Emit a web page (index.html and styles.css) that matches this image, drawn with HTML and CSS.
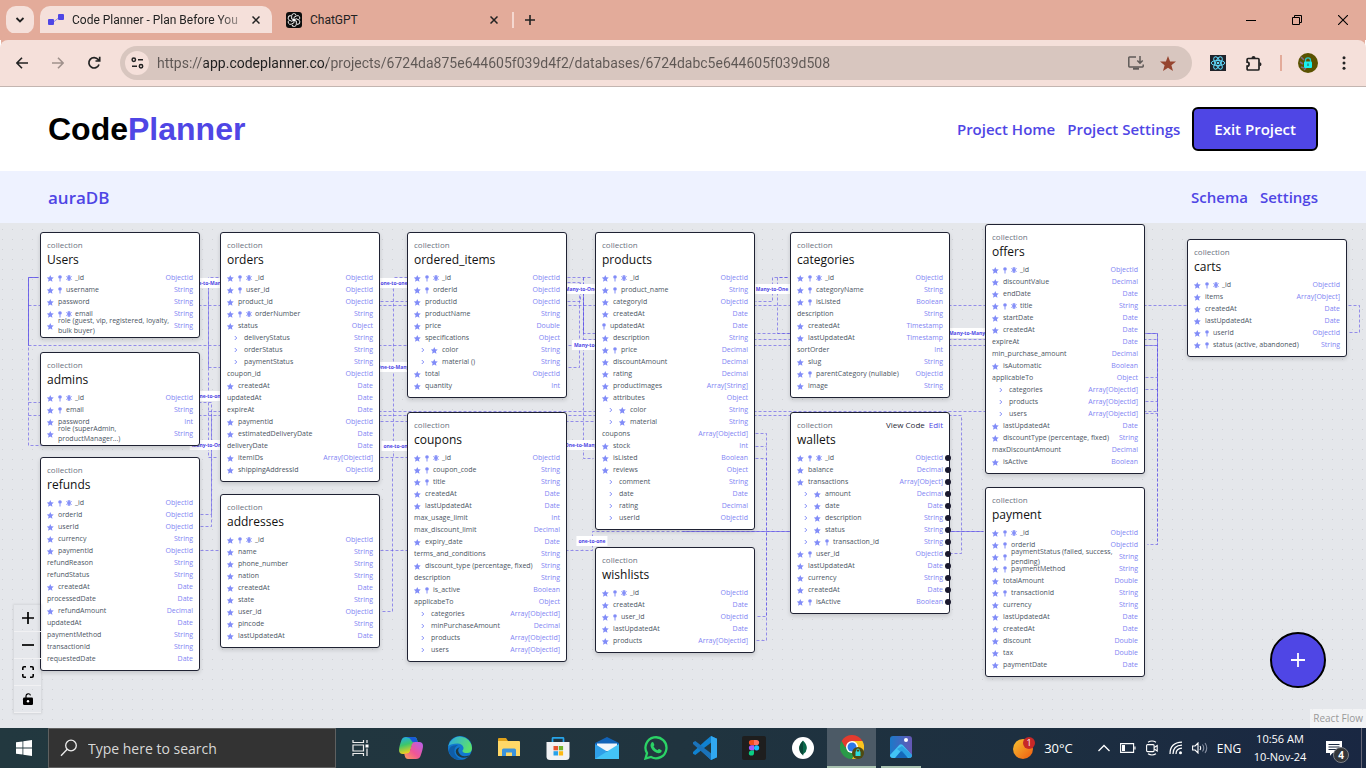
FILE: index.html
```html
<!DOCTYPE html>
<html lang="en">
<head>
<meta charset="utf-8">
<title>Code Planner - Plan Before You Code</title>
<link rel="stylesheet" href="styles.css">
</head>
<body>
<div class="tabstrip">
  <button class="tab-search" aria-label="Search tabs"><svg width="10" height="8" viewBox="0 0 10 8"><path d="M1.500 2l3.500 3.500L8.500 2" fill="none" stroke="#222" stroke-width="1.800"/></svg></button>
  <div class="tab tab-active">
    <svg class="favicon" width="16" height="16" viewBox="0 0 16 16"><path d="M3 12L13 4" stroke="#8e88ee"/><rect y="7" width="6" height="6" rx="1" fill="#4f46e5"/><rect x="10" y="2" width="6" height="6" rx="1" fill="#4f46e5"/></svg>
    <span class="tab-title fade">Code Planner - Plan Before You</span>
    <button class="tab-close" aria-label="Close tab"><svg width="8" height="8" viewBox="0 0 8 8"><path d="M.5.5l7 7m0-7l-7 7" stroke="#222" stroke-width="1.500"/></svg></button>
  </div>
  <div class="tab tab-second">
    <svg class="favicon" width="16" height="16" viewBox="0 0 16 16"><rect width="16" height="16" rx="3" fill="#0d0d0d"/><g fill="none" stroke="#fff" stroke-width=".9"><g id="petal"><path d="M8 8.500V5.300l2.700-1.500a2.200 2.200 0 0 1 2.300 3.700"/></g><use href="#petal" transform="rotate(60 8 8)"/><use href="#petal" transform="rotate(120 8 8)"/><use href="#petal" transform="rotate(180 8 8)"/><use href="#petal" transform="rotate(240 8 8)"/><use href="#petal" transform="rotate(300 8 8)"/></g></svg>
    <span class="tab-title">ChatGPT</span>
    <button class="tab-close" aria-label="Close tab"><svg width="8" height="8" viewBox="0 0 8 8"><path d="M.5.5l7 7m0-7l-7 7" stroke="#222" stroke-width="1.500"/></svg></button>
  </div>
  <button class="new-tab" aria-label="New tab"><svg width="10" height="10" viewBox="0 0 10 10"><path d="M5 0v10M0 5h10" stroke="#222" stroke-width="1.600"/></svg></button>
  <div class="window-buttons">
    <button aria-label="Minimize"><svg width="10" height="10" viewBox="0 0 10 10"><path d="M0 5.500h10" stroke="#000"/></svg></button>
    <button aria-label="Restore"><svg width="10" height="10" viewBox="0 0 10 10" fill="none" stroke="#000"><path d="M.5 2.500h7v7h-7zM2.500 2.500v-2h7v7h-2"/></svg></button>
    <button aria-label="Close"><svg width="10" height="10" viewBox="0 0 10 10"><path d="M0 0l10 10M10 0L0 10" stroke="#000" stroke-width="1.100"/></svg></button>
  </div>
</div>
<div class="toolbar">
  <button aria-label="Back"><svg width="12" height="12" viewBox="0 0 12 12" fill="none" stroke="#222" stroke-width="1.600"><path d="M12 6H1M6 .8L.9 6 6 11.200"/></svg></button>
  <button aria-label="Forward"><svg width="12" height="12" viewBox="0 0 12 12" fill="none" stroke="#a0918c" stroke-width="1.600"><path d="M0 6h11M6 .8L11.100 6 6 11.200"/></svg></button>
  <button aria-label="Reload"><svg width="14" height="14" viewBox="0 0 14 14" fill="none" stroke="#222" stroke-width="1.700"><path d="M12 8.500A5.200 5.200 0 1 1 11.200 3.600L12.500 5M12.700.8V5H8.500"/></svg></button>
  <div class="omnibox">
    <button class="site-info" aria-label="Site information"><svg width="13" height="12" viewBox="0 0 13 12" fill="none" stroke="#222" stroke-width="1.500"><circle cx="2.800" cy="2.800" r="1.700"/><path d="M7 2.800h5M1 9.200h5"/><circle cx="10" cy="9.200" r="1.700"/></svg></button>
    <input class="url" type="text" aria-label="Address" value="https://app.codeplanner.co/projects/6724da875e644605f039d4f2/databases/6724dabc5e644605f039d508">
    <button aria-label="Install app"><svg width="16" height="14" viewBox="0 0 16 14" fill="none" stroke="#5f5a58" stroke-width="1.500"><path d="M8 1H1.500Q.8 1 .8 1.700V10.300Q.8 11 1.500 11H14.500Q15.200 11 15.200 10.300V8.500M12 0V6.500M9.300 4.500L12 7.200l2.700-2.700"/><path d="M5 12.700h6" stroke-width="2"/></svg></button>
    <button aria-label="Bookmark"><svg width="16" height="15" viewBox="0 0 16 15"><path d="M8 0l2.100 5.400 5.900.2-4.600 3.600L13 15 8 11.700 3 15l1.600-5.800L0 5.600l5.900-.2z" fill="#96452f"/></svg></button>
  </div>
  <button class="ext" aria-label="React Developer Tools"><svg width="16" height="16" viewBox="0 0 16 16"><rect width="16" height="16" fill="#20232a"/><g fill="none" stroke="#61dafb"><ellipse cx="8" cy="8" rx="6.800" ry="2.600"/><ellipse cx="8" cy="8" rx="6.800" ry="2.600" transform="rotate(60 8 8)"/><ellipse cx="8" cy="8" rx="6.800" ry="2.600" transform="rotate(120 8 8)"/></g><circle cx="8" cy="8" r="1.300" fill="#61dafb"/></svg></button>
  <button class="ext" aria-label="Extensions"><svg width="17" height="17" viewBox="0 0 17 17"><path d="M2 3.500h10q1 0 1 1V14q0 1-1 1H2q-.9 0-.9-1v-2.800a2 2 0 0 0 0-4V4.500q0-1 .9-1z" fill="none" stroke="#222" stroke-width="1.700"/><path d="M5.500 3a2 2 0 0 1 4 0zM13.500 7.200a2 2 0 0 1 0 4z" fill="#222"/></svg></button>
  <i class="bar-sep"></i>
  <button class="ext" aria-label="Profile"><svg width="20" height="20" viewBox="0 0 20 20"><circle cx="10" cy="10" r="10" fill="#5a5200"/><path d="M3 4l3 3M2 9l3 2M3 14l3 1M6 17l2-2" stroke="#7b6a86" stroke-width="1.600"/><path d="M7.500 9V7.300a2.500 2.500 0 0 1 5 0V9" fill="none" stroke="#28c9c9" stroke-width="1.300"/><rect x="6" y="8.500" width="8" height="6.500" rx="1" fill="#19f0f0"/><path d="M10 10.500v2.500" stroke="#27584f"/></svg></button>
  <button class="menu-btn" aria-label="Menu"><svg width="4" height="14" viewBox="0 0 4 14" fill="#222"><circle cx="2" cy="1.800" r="1.500"/><circle cx="2" cy="7" r="1.500"/><circle cx="2" cy="12.200" r="1.500"/></svg></button>
</div>

<header class="app-header">
  <a class="logo" href="#">Code<span>Planner</span></a>
  <nav class="links"><a href="#">Project Home</a><a href="#">Project Settings</a><button class="exit">Exit Project</button></nav>
</header>
<div class="subbar">
  <h1>auraDB</h1>
  <nav class="links"><a href="#">Schema</a><a href="#">Settings</a></nav>
</div>

<main class="flow" id="flow">
  <svg class="edges" id="edges" aria-hidden="true"></svg>
  <div class="controls">
    <button aria-label="Zoom in"><svg width="12" height="12" viewBox="0 0 12 12"><path d="M6 0v12M0 6h12" stroke="#000" stroke-width="1.700"/></svg></button>
    <button aria-label="Zoom out"><svg width="12" height="12" viewBox="0 0 12 12"><path d="M0 6h12" stroke="#000" stroke-width="1.700"/></svg></button>
    <button aria-label="Fit view"><svg width="12" height="12" viewBox="0 0 12 12" fill="none" stroke="#000" stroke-width="1.600"><path d="M.8 4V2q0-1.200 1.200-1.200h2M8 .8h2q1.200 0 1.200 1.200v2M11.200 8v2q0 1.200-1.200 1.200H8M4 11.200H2Q.8 11.200.8 10V8"/></svg></button>
    <button aria-label="Toggle interactivity"><svg width="10" height="12" viewBox="0 0 10 12"><path d="M3 5V3a2.300 2.300 0 0 1 4.500-.6" fill="none" stroke="#000" stroke-width="1.200"/><rect y="4.500" width="10" height="7.500" rx="1.200"/><circle cx="5" cy="8.200" r="1.200" fill="#fff"/></svg></button>
  </div>
  <button class="add" aria-label="Add collection"><svg width="14" height="14" viewBox="0 0 14 14"><path d="M7 0v14M0 7h14" stroke="#fff" stroke-width="1.800"/></svg></button>
  <a class="attribution" href="#">React Flow</a>
</main>

<footer class="taskbar">
  <button class="start" aria-label="Start"><svg width="16" height="16" viewBox="0 0 16 16" fill="#fff"><path d="M0 2.300L6.500 1.400v6.200H0zM7.300 1.300L16 0v7.600H7.300zM0 8.400h6.500v6.200L0 13.700zM7.300 8.400H16V16l-8.700-1.300z"/></svg></button>
  <label class="search"><svg width="18" height="18" viewBox="0 0 18 18" fill="none" stroke="#eee" stroke-width="1.300"><circle cx="11" cy="6.500" r="5.300"/><path d="M7.200 10.300L1 16.800"/></svg><input type="text" placeholder="Type here to search" aria-label="Type here to search"></label>
  <div class="apps">
    <button aria-label="Task view"><svg width="17" height="16" viewBox="0 0 17 16" fill="none" stroke="#eee" stroke-width="1.200"><path d="M1 0v2.500h10.500V0M1 5h10.500v6H1zM1 16v-2.500h10.500V16M15 0v3M15 8.500V16"/><path d="M13.500 4.500h3v3h-3z" fill="#fff" stroke="none"/></svg></button>
    <button aria-label="Copilot"><svg width="24" height="22" viewBox="0 0 24 22"><defs><linearGradient id="c1" x1="0" y1="0" x2=".3" y2="1"><stop offset="0" stop-color="#20a8f5"/><stop offset=".5" stop-color="#3cc66b"/><stop offset="1" stop-color="#f5cf1c"/></linearGradient><linearGradient id="c2" x1="1" y1="0" x2="0" y2="1"><stop offset="0" stop-color="#b460f0"/><stop offset=".55" stop-color="#f05695"/><stop offset="1" stop-color="#fda057"/></linearGradient></defs><path d="M7 0h8q2.500 0 3.200 3l.6 2.500h-3q-2 0-2.600 2l-2.200 7.500q-.7 2-3 2H4q-4 0-4-4Q0 10 2.500 3 3.500 0 7 0z" fill="url(#c1)"/><path d="M7 0h8q2.500 0 3.200 3l.6 2.500h-3Q13 5.500 12 3t-5-3z" fill="#185bd8"/><path d="M17 22H9q-2.500 0-3.200-3l-.6-2.500h3q2 0 2.600-2l2.200-7.500q.7-2 3-2H20q4 0 4 4 0 3-2.500 10-1 3-4.500 3z" fill="url(#c2)"/></svg></button>
    <button aria-label="Edge"><svg width="24" height="24" viewBox="0 0 24 24"><defs><linearGradient id="e1" x1="0" y1="0" x2="1" y2=".4"><stop offset="0" stop-color="#2aa7e8"/><stop offset="1" stop-color="#5be06e"/></linearGradient></defs><circle cx="12" cy="12" r="12" fill="#1279cf"/><path d="M.3 10A12 12 0 0 1 24 12q0 5-5 5-5-.2-4.500-2.500 1.500-1.500.8-3.500Q14 7.500 9.500 7.500 3 7.500.3 10z" fill="url(#e1)"/><path d="M10 9q-5 3-3 9 2.500 5 8 5.600Q4 25 1 16 .3 8.500 10 9z" fill="#0f5da8"/><path d="M12 11q-2.500 2-1.500 5 2.500 6 10.500 3.500Q22 19 21 20.500 13 24 8.500 18 6 13 12 11z" fill="#1f3a44"/></svg></button>
    <button aria-label="File Explorer"><svg width="22" height="20" viewBox="0 0 22 20"><path d="M0 1q0-1 1-1h7l2 3H0z" fill="#e0a21a"/><path d="M0 3h21q1 0 1 1v14H0z" fill="#ffd867"/><path d="M4 18v-6q0-1.500 1.500-1.500h11Q18 10.500 18 12v6h-4v-3.500H8V18z" fill="#3b93dc"/></svg></button>
    <button aria-label="Microsoft Store"><svg width="24" height="23" viewBox="0 0 24 23"><path d="M6.500 6V1.500Q6.500.8 7.200.8h9.600q.7 0 .7.700V6" fill="none" stroke="#27a5ea" stroke-width="1.700"/><path d="M.5 5h23v14.500q0 3.500-3.500 3.500H4Q.5 23 .5 19.500z" fill="#f1f2f4"/><path d="M7.500 9H12v4.300H7.500z" fill="#e8552f"/><path d="M12.800 9h4.300v4.300h-4.300z" fill="#72b52c"/><path d="M7.500 14.200H12v4.300H7.500z" fill="#28a2ea"/><path d="M12.800 14.200h4.300v4.300h-4.300z" fill="#fdb913"/></svg></button>
    <button aria-label="Mail"><svg width="24" height="22" viewBox="0 0 24 22"><path d="M0 6l12-6 12 6v8H0z" fill="#1163b8"/><path d="M2 6.500h20V14H2z" fill="#f1f5fa"/><path d="M0 7l24 15H0z" fill="#2f9fe8"/><path d="M24 7L0 22h24z" fill="#43c3f6"/></svg></button>
    <button aria-label="WhatsApp"><svg width="24" height="24" viewBox="0 0 24 24"><path d="M1.500 22.500L3 17.200A10.500 10.500 0 1 1 7 21z" fill="#22383f" stroke="#2bd366" stroke-width="2.300"/><path d="M7.500 6.500q1.500-1 2 .2l.8 2q.2.700-.8 1.800 1.500 2.700 4 3.700 1.200-1.500 1.700-1.200l2.300 1.200q.6.500-.3 2-2 1.800-4.700.6Q7.500 14.500 6.500 10q-.2-2 1-3.500z" fill="#2bd366"/></svg></button>
    <button aria-label="Visual Studio Code"><svg width="24" height="24" viewBox="0 0 24 24"><path d="M18 0l6 2.800v18.400L18 24 8 14.500 2.300 19 0 17.800V16l12-11z" fill="#1082d0"/><path d="M0 6.200L2.300 5 18 17v7L0 8z" fill="#1b73ba"/><path d="M18 0l6 2.800v18.400L18 24z" fill="#31a8f1"/><path d="M18 6.800v10.400L11 12z" fill="#203840"/></svg></button>
    <button aria-label="Figma"><svg width="24" height="24" viewBox="0 0 24 24"><rect width="24" height="24" rx="2" fill="#1e1e1e"/><path d="M12 4H9.500a2.600 2.600 0 0 0 0 5.200H12z" fill="#f24e1e"/><path d="M12 4h2.500a2.600 2.600 0 0 1 0 5.200H12z" fill="#ff7262"/><path d="M12 9.200H9.500a2.600 2.600 0 0 0 0 5.200H12z" fill="#a259ff"/><circle cx="14.600" cy="11.800" r="2.600" fill="#1abcfe"/><path d="M12 14.400H9.500a2.600 2.600 0 1 0 2.500 2.600z" fill="#0acf83"/></svg></button>
    <button aria-label="MongoDB Compass"><svg width="22" height="22" viewBox="0 0 22 22"><circle cx="11" cy="11" r="11" fill="#fff"/><path d="M11 3.500q4 4 3.800 8-.3 3.500-3.300 5.500l-.5 2-.5-2q-3-2-3.300-5.500Q7 7.500 11 3.500z" fill="#0a684a"/><path d="M11 4v14q-3.500-2-3.700-6Q7 8 11 4z" fill="#0a4638"/></svg></button>
    <button class="running current" aria-label="Google Chrome"><svg width="24" height="24" viewBox="0 0 24 24"><path d="M12 12L1.600 6A12 12 0 0 1 22.400 6z" fill="#e33b2e"/><path d="M12 12V6h10.400A12 12 0 0 1 12 24z" fill="#fcc31e"/><path d="M1.600 6A12 12 0 0 0 12 24l5.200-9H7z" fill="#2a9a48"/><path d="M1.600 6h10.400v6H5z" fill="#e33b2e"/><circle cx="12" cy="12" r="6" fill="#fff"/><circle cx="12" cy="12" r="4.500" fill="#2b78ea"/><circle cx="18" cy="18" r="6" fill="#4f4a10"/><rect x="15.500" y="16.500" width="5" height="4.500" fill="#2edada"/><path d="M16.500 17v-1.500a1.500 1.500 0 0 1 3 0V17" fill="none" stroke="#2edada" stroke-width=".9"/></svg></button>
    <button class="running" aria-label="Photos"><svg width="22" height="22" viewBox="0 0 22 22"><defs><linearGradient id="p1" x1="0" y1="0" x2="1" y2="0"><stop offset="0" stop-color="#1b79c9"/><stop offset="1" stop-color="#6657b5"/></linearGradient></defs><rect width="22" height="22" rx="3" fill="url(#p1)"/><path d="M0 19L9.500 8.800q1.500-1.300 3 0L22 19q0 3-3 3H3q-3 0-3-3z" fill="#42c4f5"/><path d="M5 22l5.500-6.500q1-1 2 0L18 22z" fill="#1568b8"/><path d="M12 10l10 9q0 3-3 3L7 13z" fill="#157fd0" opacity=".5"/><circle cx="16" cy="4" r="2" fill="#fff"/></svg></button>
  </div>
  <div class="tray">
    <button class="weather"><svg width="22" height="22" viewBox="0 0 22 22"><defs><linearGradient id="w1" x1="0" y1="0" x2="1" y2="1"><stop offset="0" stop-color="#f7c331"/><stop offset="1" stop-color="#ef5a10"/></linearGradient></defs><circle cx="10" cy="12" r="10" fill="url(#w1)"/><circle cx="16" cy="6" r="6" fill="#c62828"/><text x="16" y="9" text-anchor="middle" fill="#fff" font-size="9">1</text></svg>30°C</button>
    <button aria-label="Hidden icons"><svg width="12" height="8" viewBox="0 0 12 8"><path d="M.5 7L6 1.500 11.500 7" fill="none" stroke="#fff" stroke-width="1.300"/></svg></button>
    <button aria-label="Battery"><svg width="16" height="10" viewBox="0 0 16 10"><path d="M.6.600h13v8.800H.6zM15 3.500v3" fill="none" stroke="#fff" stroke-width="1.100"/><path d="M2 2h3v6H2z" fill="#fff"/></svg></button>
    <button aria-label="Meet now"><svg width="12" height="16" viewBox="0 0 12 16" fill="none" stroke="#fff" stroke-width="1.100"><rect x=".6" y="4.600" width="7.500" height="7" rx="1"/><path d="M8.200 7.500l3-2v5.500l-3-2M2 2.200q4-2.400 8 0M2 13.800q4 2.400 8 0"/></svg></button>
    <button aria-label="Network"><svg width="14" height="14" viewBox="0 0 14 14" fill="none" stroke="#fff" stroke-width="1.200"><path d="M1 13Q1 1.500 13 1.200M4 13q0-8.500 9-8.800M7 13q0-5.500 6-5.800"/><circle cx="11.500" cy="11.700" r="1.500" fill="#fff" stroke="none"/></svg></button>
    <button aria-label="Volume"><svg width="16" height="12" viewBox="0 0 16 12" fill="none" stroke="#fff" stroke-width="1.100"><path d="M.6 4h2.500L6 1v10L3.100 8H.6zM8 4q1.300 2 0 4"/><path d="M10.500 2.500q2.500 3.500 0 7M13 1q3.500 5 0 10" stroke="#8790a3"/></svg></button>
    <button class="lang">ENG</button>
    <button class="clock"><span>10:56 AM</span><span>10-Nov-24</span></button>
    <button class="notice" aria-label="4 notifications"><svg width="16" height="15" viewBox="0 0 16 15"><path d="M0 0h16v12H6.500L4 14.800V12H0z" fill="#fff"/><path d="M2.500 3.500h11M2.500 6h11M2.500 8.500h8" stroke="#1b2a42"/></svg><b>4</b></button>
  </div>
</footer>
<script src="flow.js"></script>
</body>
</html>
```
FILE: styles.css
```css
* { box-sizing: border-box; }
body {
  margin: 0;
  height: 100vh;
  display: flex;
  flex-direction: column;
  overflow: hidden;
  font-family: "Open Sans", "Noto Sans", sans-serif;
  font-size: 12px;
  color: #222;
}
button {
  border: 0;
  padding: 0;
  background: none;
  font: inherit;
  color: inherit;
  display: flex;
  align-items: center;
  justify-content: center;
}
a { text-decoration: none; }
svg { flex: none; }

/* browser window */
.tabstrip {
  height: 40px;
  flex: none;
  background: #e3ab9a;
  display: flex;
  align-items: flex-start;
  padding: 6px 0 0 6px;
}
.tab-search { width: 28px; height: 28px; border-radius: 10px; background: #f5e0da; margin-right: 6px; }
.tab { height: 34px; display: flex; align-items: center; padding-bottom: 6px; }
.tab-active {
  width: 232px;
  padding-left: 8px;
  background: #f5e0da;
  border-radius: 10px 10px 0 0;
}
.favicon { margin-right: 8px; }
.tab-title { flex: 1; white-space: nowrap; font: 12px Roboto, sans-serif; }
.fade { mask-image: linear-gradient(to right, #000 85%, rgba(0, 0, 0, .3)); }
.tab-close { width: 16px; height: 16px; margin: 0 8px 0 6px; }
.tab-second { width: 240px; padding-left: 14px; }
.tab-second .tab-close { margin-right: 10px; }
.new-tab { height: 16px; margin-top: 6px; padding: 0 12px 0 11px; border-left: 2px solid #f5d8d0; }
.window-buttons { margin-left: auto; display: flex; }
.window-buttons button { width: 46px; height: 28px; }
.toolbar {
  height: 47px;
  flex: none;
  background: #f5e0da;
  border-bottom: 1px solid #c3b5b0;
  border-radius: 8px 8px 0 0;
  box-shadow: 0 -8px 0 -1px #e3ab9a;
  display: flex;
  align-items: center;
  padding: 0 4px;
}
.toolbar > button { width: 36px; height: 34px; }
.omnibox {
  flex: 1;
  height: 34px;
  margin: 0 8px;
  padding: 0 8px 0 5px;
  border-radius: 17px;
  background: #d8c6bf;
  display: flex;
  align-items: center;
}
.site-info { width: 24px; height: 24px; border-radius: 50%; background: #f5e0da; }
.omnibox button:not(.site-info) { width: 32px; height: 32px; }
.url {
  flex: 1;
  border: 0;
  outline: 0;
  padding: 0 8px;
  font: 14px Roboto, sans-serif;
  color: #3f3b3a;
  background: linear-gradient(to right, #5e5754 55px, #1f1f1f 55px, #1f1f1f 178px, #5e5754 178px);
  background-clip: text;
  -webkit-text-fill-color: transparent;
}
.bar-sep { width: 2px; height: 16px; margin: 0 8px; background: #e3ab9a; }

/* app header */
.app-header {
  flex: none;
  height: 84px;
  padding: 0 48px;
  background: #fff;
  display: flex;
  align-items: center;
  justify-content: space-between;
}
.logo { font: bold 32px "Liberation Sans", sans-serif; color: #000; }
.logo span { color: #4f46e5; }
.links { display: flex; align-items: center; gap: 12px; font-size: 15px; font-weight: 600; }
.links a { color: #4f46e5; }
.exit {
  height: 44px;
  padding: 0 20px;
  border: 2px solid #000;
  border-radius: 6px;
  background: #4f46e5;
  color: #fff;
}
.subbar {
  flex: none;
  height: 52px;
  padding: 0 48px;
  background: #eef2ff;
  display: flex;
  align-items: center;
  justify-content: space-between;
}
.subbar h1 { margin: 0; font-size: 17px; font-weight: 600; color: #4f46e5; }

/* diagram */
.flow {
  flex: 1;
  position: relative;
  overflow: hidden;
  background: #e5e7eb conic-gradient(from 90deg at 9px 9px, #cfd1d6 25%, transparent 0) 3px 7px / 10px 10px;
}
.edges { position: absolute; inset: 0; width: 100%; height: 100%; }
.edges path { fill: none; stroke: #5b50e8; stroke-opacity: .6; stroke-dasharray: 3 2; }
.edges .strong { stroke-opacity: .6; stroke-dasharray: none; }
.edge-label {
  position: absolute;
  transform: translate(-50%, -50%);
  padding: 2px;
  background: #fff;
  color: #4f46e5;
  font-size: 5px;
  line-height: 6px;
  font-weight: 700;
  white-space: nowrap;
}
.node {
  position: absolute;
  width: 160px;
  padding: 6px 6px 5px;
  border: 1px solid #1f2233;
  border-radius: 3px;
  background: #fff;
  box-shadow: 0 2px 4px rgba(0, 0, 0, .14);
  font-size: 7px;
}
.node-head { display: flex; gap: 4px; font-size: 8px; line-height: 12px; color: #6b7280; }
.node-head span { flex: 1; }
.node-head button { color: #1f2937; }
.node-head .edit { color: #4f46e5; }
.node h2 { margin: 0 0 3px; font-size: 12px; line-height: 18px; font-weight: 500; color: #111; }
.node ul { list-style: none; margin: 0; padding: 0; }
.field { position: relative; height: 12px; display: flex; align-items: center; color: #4b5563; line-height: 10px; }
.field .name { flex: 1; white-space: pre; }
.field .type { color: #8184f3; }
.star { margin-right: 4px; }
.pin { margin-right: 4px; }
.snow { margin-right: 3px; }
.chev { margin: 0 6px 0 7px; }
.field .handle { position: absolute; right: -8px; width: 6px; height: 6px; border-radius: 50%; background: #1a1a2e; }
.controls { position: absolute; left: 14px; bottom: 15px; width: 27px; box-shadow: 0 0 2px 1px rgba(0, 0, 0, .08); }
.controls button { width: 100%; height: 27px; border-bottom: 1px solid #f1f1f3; }
.add {
  position: absolute;
  right: 40px;
  bottom: 40px;
  width: 56px;
  height: 56px;
  border: 2px solid #000;
  border-radius: 50%;
  background: #4f46e5;
}
.attribution {
  position: absolute;
  right: 0;
  bottom: 0;
  padding: 2px 3px;
  background: rgba(255, 255, 255, .5);
  color: #999;
  font-size: 10px;
  line-height: 15px;
}

/* desktop taskbar */
.taskbar {
  flex: none;
  height: 40px;
  background: linear-gradient(to right, #22383f, #20343f 50%, #1d2f40 75%, #192742);
  color: #fff;
  display: flex;
  align-items: stretch;
}
.start { width: 48px; }
.search {
  width: 288px;
  padding-left: 11px;
  background: #333;
  border: 1px solid #5f6060;
  display: flex;
  align-items: center;
  gap: 10px;
}
.search input { flex: 1; min-width: 0; border: 0; outline: 0; padding: 0; background: none; font: 14px "Open Sans", sans-serif; color: #fff; }
.search input::placeholder { color: #d8d8d8; opacity: 1; }
.apps { display: flex; }
.apps button { width: 49px; }
.apps button:first-child { width: 48px; margin-right: 2px; }
.running { border-bottom: 2px solid #a9c2b0; }
.apps .running:last-child { width: 40px; margin-left: 5px; }
.current { background: #4c5a66; }
.tray { margin-left: auto; display: flex; align-items: stretch; padding-right: 4px; }
.tray > button { width: 24px; }
.tray > .weather { width: 62px; margin-right: 18px; gap: 9px; font-size: 13px; }
.tray > .lang { width: 34px; }
.tray > .clock { width: 68px; flex-direction: column; line-height: 18px; font-size: 11px; }
.tray > .notice { width: 44px; margin-left: 4px; padding-right: 12px; border-right: 1px solid #667; position: relative; }
.notice b {
  position: absolute;
  left: 15px;
  top: 19px;
  width: 16px;
  height: 16px;
  border-radius: 50%;
  border: 1px solid #7c7f86;
  background: #333639;
  font-size: 10px;
  line-height: 14px;
}
```
FILE: flow.js
```js
// Field flags: ">" nested, "*" required, "!" unique, "#" indexed.
const nodes = [
  ["Users", 40, 9, ["*!# _id:ObjectId", "*! username:String", "* password:String", "*!# email:String", "* role (guest, vip, registered, loyalty,\nbulk buyer):String"]],
  ["admins", 40, 129, ["*!# _id:ObjectId", "*! email:String", "* password:Int", "* role (superAdmin,\nproductManager...):String"]],
  ["refunds", 40, 234, ["*!# _id:ObjectId", "* orderId:ObjectId", "* userId:ObjectId", "* currency:String", "* paymentId:ObjectId", " refundReason:String", " refundStatus:String", "* createdAt:Date", " processedDate:Date", "* refundAmount:Decimal", " updatedAt:Date", " paymentMethod:String", " transactionId:String", " requestedDate:Date"]],
  ["orders", 220, 9, ["*!# _id:ObjectId", "*! user_id:ObjectId", "* product_id:ObjectId", "*!# orderNumber:String", "* status:Object", "> deliveryStatus:String", "> orderStatus:String", "> paymentStatus:String", " coupon_id:ObjectId", "* createdAt:Date", " updatedAt:Date", " expireAt:Date", "* paymentId:ObjectId", "* estimatedDeliveryDate:Date", " deliveryDate:Date", "* itemIDs:Array[ObjectId]", "* shippingAddressId:ObjectId"]],
  ["addresses", 220, 271, ["*!# _id:ObjectId", "* name:String", "* phone_number:String", "* nation:String", "* createdAt:Date", "* state:String", "* user_id:ObjectId", "* pincode:String", "* lastUpdatedAt:Date"]],
  ["ordered_items", 407, 9, ["*!# _id:ObjectId", "*! orderId:ObjectId", "* productId:ObjectId", "* productName:String", "* price:Double", "* specifications:Object", ">* color:String", ">* material ():String", "* total:ObjectId", "* quantity:Int"]],
  ["coupons", 407, 189, ["*!# _id:ObjectId", "*! coupon_code:String", "*! title:String", "* createdAt:Date", "* lastUpdatedAt:Date", " max_usage_limit:Int", " max_discount_limit:Decimal", "* expiry_date:Date", " terms_and_conditions:String", "* discount_type (percentage, fixed):String", " description:String", "*! is_active:Boolean", " applicabeTo:Object", "> categories:Array[ObjectId]", "> minPurchaseAmount:Decimal", "> products:Array[ObjectId]", "> users:Array[ObjectId]"]],
  ["products", 595, 9, ["*!# _id:ObjectId", "*! product_name:String", "* categoryId:ObjectId", "* createdAt:Date", "! updatedAt:Date", "* description:String", "*! price:Decimal", "* discountAmount:Decimal", "* rating:Decimal", "* productImages:Array[String]", "* attributes:Object", ">* color:String", ">* material:String", " coupons:Array[ObjectId]", "* stock:Int", "* isListed:Boolean", "* reviews:Object", "> comment:String", "> date:Date", "> rating:Decimal", "> userId:ObjectId"]],
  ["wishlists", 595, 324, ["*!# _id:ObjectId", "* createdAt:Date", "*! user_id:ObjectId", "* lastUpdatedAt:Date", "* products:Array[ObjectId]"]],
  ["categories", 790, 9, ["*!# _id:ObjectId", "*! categoryName:String", "*! isListed:Boolean", " description:String", "* createdAt:Timestamp", "* lastUpdatedAt:Timestamp", " sortOrder:Int", "* slug:String", "*! parentCategory (nullable):ObjectId", "* image:String"]],
  ["wallets", 790, 189, ["*!# _id:ObjectId", "* balance:Decimal", "* transactions:Array[Object]", ">* amount:Decimal", ">* date:Date", ">* description:String", ">* status:String", ">*! transaction_id:String", "*! user_id:ObjectId", "* lastUpdatedAt:Date", "* currency:String", "* createdAt:Date", "*! isActive:Boolean"], true],
  ["offers", 985, 1, ["*!# _id:ObjectId", "* discountValue:Decimal", "* endDate:Date", "*!# title:String", "* startDate:Date", "* createdAt:Date", " expireAt:Date", " min_purchase_amount:Decimal", "* isAutomatic:Boolean", " applicableTo:Object", "> categories:Array[ObjectId]", "> products:Array[ObjectId]", "> users:Array[ObjectId]", "* lastUpdatedAt:Date", "* discountType (percentage, fixed):String", " maxDiscountAmount:Decimal", "* isActive:Boolean"]],
  ["payment", 985, 264, ["*!# _id:ObjectId", "*! orderId:ObjectId", "*! paymentStatus (failed, success,\npending):String", "*! paymentMethod:String", "* totalAmount:Double", "*! transactionId:String", "* currency:String", "* lastUpdatedAt:Date", "* createdAt:Date", "* discount:Double", "* tax:Double", "* paymentDate:Date"]],
  ["carts", 1187, 16, ["*!# _id:ObjectId", "* items:Array[Object]", "* createdAt:Date", "* lastUpdatedAt:Date", "*! userId:ObjectId", "*! status (active, abandoned):String"]]
];

const icons = {
  "*": '<svg class="star" width="7" height="7" viewBox="0 0 14 14"><path d="M6.500 0l2 4.300 5 .6-3.700 3.400L10.900 13.500 6.500 11 2.100 13.500l1.100-5.200L-.5 4.900l5-.6z" fill="#818cf8"/></svg>',
  "!": '<svg class="pin" width="4" height="7" viewBox="0 0 8 14"><circle cx="4" cy="4" r="3.600" fill="#818cf8"/><path d="M4 7v6" stroke="#818cf8" stroke-width="2"/></svg>',
  "#": '<svg class="snow" width="6" height="6" viewBox="0 0 12 12"><circle cx="6" cy="6" r="3.800" fill="#818cf8" opacity=".55"/><path d="M6 0v12M.8 3l10.400 6M.8 9l10.400-6M3.500 1L6 3l2.500-2M3.500 11L6 9l2.500 2" stroke="#818cf8" stroke-width="2" fill="none"/></svg>',
  ">": '<svg class="chev" width="4" height="6" viewBox="0 0 8 12"><path d="M1.500 2l4 4-4 4" fill="none" stroke="#818cf8" stroke-width="2"/></svg>'
};

const edges = [
  "M38 54H28V222H200", "M36 54H28V122", "M28 82H1359V109H1349", "M28 122H1157", "M28 179H211V303H200", "M28 192H961V330H950",
  "M218 54H208V234H218", "M208 144H220", "M208 188H1157", "M208 62V144", "M200 291H211V190", "M200 327H592V308H983",
  "M407 54H393V234", "M380 78H407", "M380 198H595", "M380 234H407", "M382 388H392V234",
  "M567 54H592", "M583 54V235H593", "M567 59H579V144H567", "M567 78H580V59", "M583 54V110H1157", "M583 116H1157",
  "M787 54H772V78H755", "M787 54H777V110H790", "M755 210H766V417H755", "M755 223H766", "M755 235H766V393H755",
  "M1145 122H1157V321H1147", "M1157 110V321", "M1145 154H1157", "M1145 166H1157", "M1145 178H1157", "M1145 190H1157"
];
const strongEdges = ["M38 54H28V122", "M682 308H983", "M1145 110H1157V188", "M583 64V110"];

const edgeLabels = [
  ["one-to-Many", 208, 60], ["one-to-one", 210, 173], ["Many-to-One", 208, 222],
  ["one-to-one", 394, 60], ["One-to-Many", 393, 144], ["one-to-one", 397, 223],
  ["Many-to-One", 581, 66], ["Many-to-Many", 592, 122], ["One-to-Many", 581, 222],
  ["one-to-one", 592, 318], ["Many-to-One", 772, 66], ["Many-to-Many", 967, 110]
];

const ns = "http://www.w3.org/2000/svg";
const flow = document.getElementById("flow");
const svg = document.getElementById("edges");
const controls = document.querySelector(".controls");

function addEdge(d, cls) {
  const path = document.createElementNS(ns, "path");
  path.setAttribute("d", d);
  path.setAttribute("transform", "translate(.5 .5)");
  if (cls) path.setAttribute("class", cls);
  svg.append(path);
}
edges.forEach(d => addEdge(d));
strongEdges.forEach(d => addEdge(d, "strong"));

edgeLabels.forEach(([text, x, y]) => {
  const el = document.createElement("div");
  el.className = "edge-label";
  el.textContent = text;
  el.style.left = x + "px";
  el.style.top = y + "px";
  flow.insertBefore(el, controls);
});

nodes.forEach(([title, x, y, fields, active]) => {
  const el = document.createElement("section");
  el.className = "node";
  el.style.left = x + "px";
  el.style.top = y + "px";
  const rows = fields.map(f => {
    const flags = f.match(/^[>*!#]*/)[0];
    const [name, type] = f.slice(flags.length + 1).split(":");
    return `<li class="field">${[...flags].map(c => icons[c]).join("")}<span class="name">${name}</span><span class="type">${type}</span>${active ? '<i class="handle"></i>' : ""}</li>`;
  }).join("");
  const actions = active ? '<button>View Code</button><button class="edit">Edit</button>' : "";
  el.innerHTML = `<div class="node-head"><span>collection</span>${actions}</div><h2>${title}</h2><ul>${rows}</ul>`;
  flow.insertBefore(el, controls);
});
```
